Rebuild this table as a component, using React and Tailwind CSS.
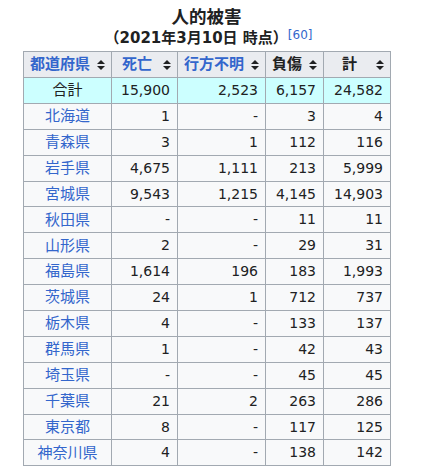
import React from 'react'

const rows = [
  ['北海道', '1', '-', '3', '4'],
  ['青森県', '3', '1', '112', '116'],
  ['岩手県', '4,675', '1,111', '213', '5,999'],
  ['宮城県', '9,543', '1,215', '4,145', '14,903'],
  ['秋田県', '-', '-', '11', '11'],
  ['山形県', '2', '-', '29', '31'],
  ['福島県', '1,614', '196', '183', '1,993'],
  ['茨城県', '24', '1', '712', '737'],
  ['栃木県', '4', '-', '133', '137'],
  ['群馬県', '1', '-', '42', '43'],
  ['埼玉県', '-', '-', '45', '45'],
  ['千葉県', '21', '2', '263', '286'],
  ['東京都', '8', '-', '117', '125'],
  ['神奈川県', '4', '-', '138', '142'],
]

function SortIcon() {
  return (
    <svg width="8" height="10" viewBox="0 0 8 10" className="absolute right-[6px] top-1/2 -translate-y-1/2">
      <path d="M4 0 L8 4 L0 4 Z" fill="#202122" />
      <path d="M0 6 L8 6 L4 10 Z" fill="#202122" />
    </svg>
  )
}

function Th({ children, link }) {
  return (
    <th className="relative h-[26px] border border-[#a2a9b1] bg-[#eaecf0] pl-[6px] pr-[21px] text-center text-[15px] font-bold p-0">
      <span className={link ? 'text-[#3366cc]' : 'text-[#202122]'}>{children}</span>
      <SortIcon />
    </th>
  )
}

export default function App() {
  const td = 'h-[25.9px] border border-[#a2a9b1] px-[7px] p-0 text-right'
  return (
    <div
      className="bg-white w-[425px] h-[466px] overflow-hidden text-[14px] text-[#202122]"
      style={{ fontFamily: '"DejaVu Sans", "Noto Sans CJK JP", sans-serif' }}
    >
      <div className="ml-[23px] w-[367px] pt-[6px]">
        <div className="text-center font-bold">
          <div className="text-[17.5px] leading-[22px]">人的被害</div>
          <div className="text-[15px] leading-[21px] pl-[4px]">
            （2021年3月10日 時点）
            <sup className="font-normal text-[12px] text-[#3366cc] relative -top-[4px]">[60]</sup>
          </div>
        </div>
        <table className="mt-[2px] w-[367px] table-fixed border-collapse bg-[#f8f9fa]">
          <colgroup>
            <col className="w-[88px]" />
            <col className="w-[66px]" />
            <col className="w-[88px]" />
            <col className="w-[58px]" />
            <col className="w-[67px]" />
          </colgroup>
          <thead>
            <tr>
              <Th link>都道府県</Th>
              <Th link>死亡</Th>
              <Th link>行方不明</Th>
              <Th>負傷</Th>
              <Th>計</Th>
            </tr>
          </thead>
          <tbody>
            <tr className="bg-[#ccffff]">
              <td className={td + ' !text-center text-[15px]'}>合計</td>
              <td className={td}>15,900</td>
              <td className={td}>2,523</td>
              <td className={td}>6,157</td>
              <td className={td}>24,582</td>
            </tr>
            {rows.map((r) => (
              <tr key={r[0]}>
                <td className={td + ' !text-center text-[15px] text-[#3366cc] !px-0'}>{r[0]}</td>
                <td className={td}>{r[1]}</td>
                <td className={td}>{r[2]}</td>
                <td className={td}>{r[3]}</td>
                <td className={td}>{r[4]}</td>
              </tr>
            ))}
          </tbody>
        </table>
      </div>
    </div>
  )
}
